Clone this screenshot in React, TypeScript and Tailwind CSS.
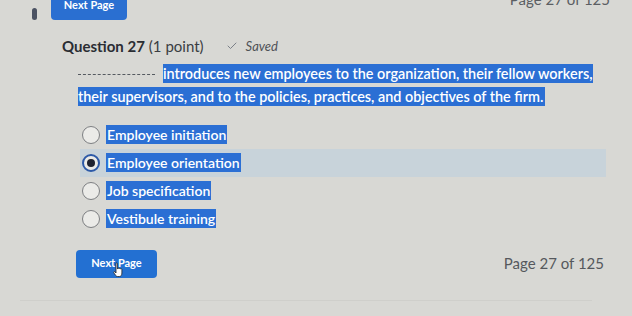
import { Check } from 'lucide-react'

const options = [
  { label: 'Employee initiation', selected: false },
  { label: 'Employee orientation', selected: true },
  { label: 'Job specification', selected: false },
  { label: 'Vestibule training', selected: false },
]

function Radio({ checked }: { checked: boolean }) {
  return (
    <span
      className={`flex items-center justify-center w-[18px] h-[18px] rounded-full border bg-[#ebebe8] ${
        checked ? 'border-[#2d5aa8] border-2' : 'border-[#7d7f82]'
      }`}
    >
      {checked && <span className="w-[8px] h-[8px] rounded-full bg-[#1f2330]" />}
    </span>
  )
}

export default function App() {
  return (
    <div
      className="relative w-[632px] h-[316px] overflow-hidden bg-[#d8d8d4] text-[#2d3035]"
      style={{ fontFamily: 'Lato, "Open Sans", sans-serif' }}
    >
      {/* top strip, cut off by the photo */}
      <div className="flex items-start h-[22px]">
        <div className="ml-[32px] mt-[8px] w-[5px] h-[12px] rounded-full bg-[#4b5262]" />
        <button className="ml-[14px] -mt-[10px] w-[76px] h-[30px] rounded-[4px] bg-[#2a6fd1] text-white text-[11px] font-bold">
          Next Page
        </button>
        <span className="ml-auto mr-[22px] -mt-[12px] text-[15px] text-[#5b5e63]">Page 27 of 125</span>
      </div>

      {/* question header */}
      <div className="flex items-center mt-[13px] ml-[62px]">
        <span className="text-[15px] font-bold text-[#2a2d33]">Question 27</span>
        <span className="ml-[4px] text-[15px] text-[#3a3d42]">(1 point)</span>
        <Check className="ml-[22px] w-[12px] h-[12px] text-[#7b8088]" strokeWidth={2} />
        <span className="ml-[8px] text-[13px] italic text-[#4f5257]">Saved</span>
      </div>

      {/* question text */}
      <div className="ml-[78px] mr-[36px] mt-[4px] text-[14.4px] leading-[23px] font-semibold text-white">
        <span className="inline-block w-[77px] mr-[8px] border-b border-dashed border-[#555a60] align-[4px]" />
        <span className="bg-[#2b6fd4] py-[1px] pr-[2px]">
          introduces new employees to the organization, their fellow workers, their supervisors, and to the policies,
          practices, and objectives of the firm.
        </span>
      </div>

      {/* options */}
      <div className="ml-[80px] w-[526px] mt-[13px] flex flex-col">
        {options.map(o => (
          <div
            key={o.label}
            className={`flex items-center h-[28px] pl-[2px] ${o.selected ? 'bg-[#c8d3da]' : ''}`}
          >
            <Radio checked={o.selected} />
            <span className="ml-[6px] bg-[#2b6fd4] text-white text-[14px] font-semibold leading-[19px] px-[1px]">
              {o.label}
            </span>
          </div>
        ))}
      </div>

      {/* footer */}
      <div className="flex items-center ml-[76px] mr-[28px] mt-[17px]">
        <button className="relative w-[81px] h-[28px] rounded-[4px] bg-[#2370d2] text-white text-[11px] font-bold">
          Next Page
          <svg className="absolute left-[37px] top-[12px]" width="10" height="16" viewBox="0 0 10 16">
            <path
              d="M3 1.5c0-.8 1.4-.8 1.4 0V7l.3-.5c.3-.6 1.3-.4 1.3.3l.2-.2c.4-.5 1.3-.2 1.3.4l.1-.1c.5-.4 1.3 0 1.3.6V11c0 2-1 3.5-2.5 3.5H4.5C3 14.5 1.5 12 .8 10.5c-.3-.7.5-1.3 1.1-.7L3 11V1.5z"
              fill="#fff"
              stroke="#222"
              strokeWidth="0.8"
            />
          </svg>
        </button>
        <span className="ml-auto text-[15px] text-[#55585d]">Page 27 of 125</span>
      </div>

      <div className="absolute left-[20px] right-[40px] top-[300px] h-px bg-[#cfcfcb]" />
    </div>
  )
}
